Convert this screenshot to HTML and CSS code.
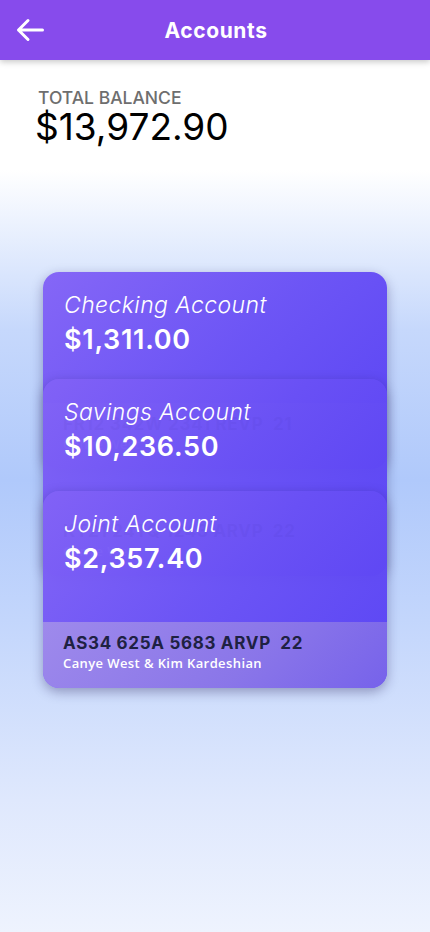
FILE: index.html
```html
<!DOCTYPE html>
<html lang="en">
<head>
<meta charset="utf-8">
<title>Accounts</title>
<link rel="stylesheet" href="styles.css">
</head>
<body>
<div class="screen">
  <header class="topbar">
    <button class="back" aria-label="Back">
      <svg width="28" height="24" viewBox="0 0 28 24" fill="none" stroke="#fff" stroke-width="3" stroke-linecap="round" stroke-linejoin="round">
        <path d="M26.5 12H2.5M12 2.5L2.5 12L12 21.5"/>
      </svg>
    </button>
    <h1 class="title">Accounts</h1>
  </header>

  <section class="balance">
    <div class="balance-label">TOTAL BALANCE</div>
    <div class="balance-value">$13,972.90</div>
  </section>

  <section class="stack">
    <article class="card">
      <div class="card-body">
        <div class="card-name">Checking Account</div>
        <div class="card-amount">$1,311.00</div>
      </div>
      <div class="card-foot">
        <div class="card-number">FR12 342W 2341 REVP  21</div>
        <div class="card-owner">Canye West</div>
      </div>
    </article>
    <article class="card">
      <div class="card-body">
        <div class="card-name">Savings Account</div>
        <div class="card-amount">$10,236.50</div>
      </div>
      <div class="card-foot">
        <div class="card-number">KT21 24TQ 1243 ARVP  22</div>
        <div class="card-owner">Canye West</div>
      </div>
    </article>
    <article class="card">
      <div class="card-body">
        <div class="card-name">Joint Account</div>
        <div class="card-amount">$2,357.40</div>
      </div>
      <div class="card-foot">
        <div class="card-number">AS34 625A 5683 ARVP&nbsp; 22</div>
        <div class="card-owner">Canye West &amp; Kim Kardeshian</div>
      </div>
    </article>
  </section>
</div>
</body>
</html>
```

FILE: styles.css
```css
* { box-sizing: border-box; }
html, body { margin: 0; padding: 0; }
body {
  font-family: "Inter", "Noto Sans", sans-serif;
  background: #fff;
}
.screen {
  width: 430px;
  min-height: 932px;
  background: linear-gradient(180deg, #ffffff 0px, #ffffff 170px, #c6d8fc 330px, #b0c9fb 480px, #c3d6fc 620px, #dfe8fd 800px, #eef3fe 932px);
  display: flex;
  flex-direction: column;
}
.topbar {
  height: 60px;
  background: #874bec;
  box-shadow: 0 2px 6px rgba(0,0,0,0.22);
  display: flex;
  align-items: center;
  position: relative;
}
.back {
  background: none;
  border: 0;
  padding: 0;
  margin-left: 16px;
  width: 28px;
  height: 24px;
  display: flex;
  cursor: pointer;
}
.title {
  margin: 0;
  flex: 1;
  text-align: center;
  margin-right: 42px;
  color: #fff;
  font-family: "Inter", sans-serif;
  font-weight: 700;
  font-size: 21px;
  letter-spacing: 0.6px;
}
.balance {
  padding: 28px 0 0 35px;
}
.balance-label {
  padding-left: 3px;
  color: #6e6e6e;
  font-size: 17.5px;
  font-weight: 500;
  line-height: 20px;
}
.balance-value {
  color: #000;
  font-size: 37px;
  font-weight: 400;
  line-height: 38px;
  letter-spacing: 0px;
}
.stack {
  margin-top: 126px;
  padding: 0 43px;
  display: flex;
  flex-direction: column;
}
.card {
  height: 197px;
  border-radius: 16px;
  overflow: hidden;
  background: linear-gradient(135deg, rgba(130,98,246,0.965) 0%, rgba(105,80,245,0.965) 50%, rgba(86,64,244,0.965) 100%);
  box-shadow: 0 4px 12px rgba(30,20,80,0.35);
  display: flex;
  flex-direction: column;
}
.card:nth-child(1) { margin-bottom: -90px; }
.card:nth-child(2) { margin-bottom: -85px; }
.card-body {
  height: 131px;
  padding: 18px 21px 0;
}
.card-name {
  color: #fff;
  font-family: "Inter", sans-serif;
  font-style: italic;
  font-weight: 300;
  font-size: 23px;
  line-height: 30px;
  letter-spacing: 0.4px;
}
.card-amount {
  margin-top: 4px;
  color: #fff;
  font-family: "Inter", sans-serif;
  font-weight: 600;
  font-size: 27px;
  line-height: 32px;
  letter-spacing: 0.7px;
}
.card-foot {
  height: 66px;
  padding: 10px 20px 0;
  background: linear-gradient(135deg, rgba(160,140,235,0.95) 0%, rgba(140,120,232,0.95) 60%, rgba(120,100,234,0.95) 100%);
}
.card-number {
  color: #1e2142;
  font-family: "Inter", sans-serif;
  font-weight: 700;
  font-size: 17px;
  line-height: 22px;
  letter-spacing: 0.7px;
  white-space: pre;
}
.card-owner {
  color: #fff;
  font-family: "Open Sans", sans-serif;
  font-weight: 600;
  font-size: 13px;
  line-height: 18px;
  letter-spacing: 0.4px;
}
```
